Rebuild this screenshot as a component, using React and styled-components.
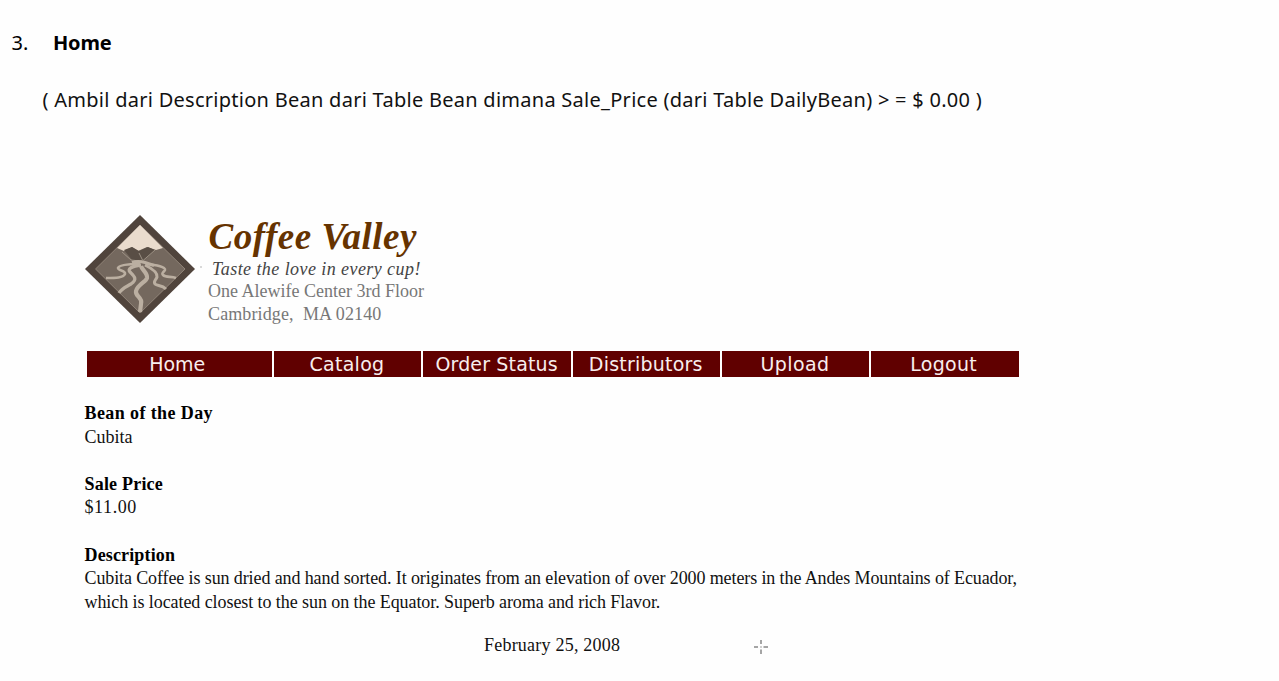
import React from 'react';
import styled, { createGlobalStyle } from 'styled-components';

const GlobalStyle = createGlobalStyle`
  body {
    margin: 0;
    background: #fefefe;
    color: #111;
  }
`;

const Page = styled.main`
  display: flex;
  flex-direction: column;
  box-sizing: border-box;
  width: 1279px;
  height: 681px;
  overflow: hidden;
  padding-top: 28px;
`;

const Heading = styled.h1`
  display: flex;
  margin: 0;
  padding-left: 11.5px;
  font: 700 20px/30px 'Noto Sans', sans-serif;
  letter-spacing: -0.2px;
  color: #000;
`;

const Ordinal = styled.span`
  width: 41.5px;
  font-weight: 400;
  letter-spacing: 0;
`;

const Note = styled.p`
  margin: 27px 0 0;
  padding-left: 42.5px;
  font: 20px/30px 'Noto Sans', sans-serif;
  letter-spacing: 0.27px;
  white-space: pre;
`;

const Site = styled.section`
  display: flex;
  flex-direction: column;
  width: 935px;
  margin: 99px 0 0 84px;
  font-family: 'Liberation Serif', serif;
`;

const Brand = styled.header`
  display: flex;
  align-items: flex-start;
  height: 137px;
`;

const Logo = styled.svg`
  width: 124px;
  height: 110px;
  flex: none;
`;

const BrandText = styled.div`
  display: flex;
  flex-direction: column;
  padding-top: 2px;
`;

const BrandName = styled.div`
  padding-left: 0.5px;
  font: italic 700 37px/42px 'Liberation Serif', serif;
  letter-spacing: 0.52px;
  color: #663300;
`;

const Tagline = styled.div`
  padding-left: 4px;
  font: italic 18px/22px 'Liberation Serif', serif;
  letter-spacing: 0.43px;
  color: #444;
`;

const Address = styled.div`
  font-size: 18px;
  line-height: 22.5px;
  letter-spacing: ${(p) => p.$spacing}px;
  white-space: pre;
  color: #777;
`;

const Nav = styled.nav`
  display: grid;
  grid-template-columns: 184.5px 147.5px 147.5px 146.5px 147.5px 147.5px;
  justify-content: space-between;
  height: 25px;
  margin-left: 3px;
`;

const NavItem = styled.a`
  background: #600000;
  color: #f8eeee;
  font: 19px/26px 'DejaVu Sans', sans-serif;
  letter-spacing: ${(p) => p.$spacing}px;
  text-align: center;
  text-indent: ${(p) => p.$shift || 0}px;
  white-space: nowrap;
`;

const Details = styled.dl`
  display: flex;
  flex-direction: column;
  gap: 23.6px;
  margin: 26px 0 0 0.5px;
  font-size: 18px;
  line-height: 23.6px;
`;

const Term = styled.dt`
  font-weight: 700;
  letter-spacing: ${(p) => p.$spacing}px;
  color: #000;
`;

const Value = styled.dd`
  margin: 0;
  letter-spacing: ${(p) => p.$spacing || 0}px;
  white-space: nowrap;
`;

const Footer = styled.footer`
  display: flex;
  align-items: center;
  margin-top: 19px;
  padding-left: 400px;
  font-size: 18px;
  line-height: 24px;
  letter-spacing: 0.22px;
`;

const Crosshair = styled.svg`
  width: 14px;
  height: 14px;
  margin: 3px 0 0 134px;
`;

const links = [
  { label: 'Home', spacing: 0, shift: -4 },
  { label: 'Catalog', spacing: 0.3, shift: -1 },
  { label: 'Order Status', spacing: 0.15, shift: -1 },
  { label: 'Distributors', spacing: 0.22, shift: -1 },
  { label: 'Upload', spacing: 0.4, shift: -1 },
  { label: 'Logout', spacing: 0.3, shift: -3 },
];

function CoffeeLogo() {
  return (
    <Logo viewBox="0 0 124 110">
      <path d="M56 1 111 55 56 109 1 55Z" fill="#50443c" />
      <path d="M56 11 101 55 56 99 11.500 55Z" fill="#74685e" stroke="#9a8e82" strokeWidth=".8" />
      <path d="M56 11 79 34 72 36 63 33 54 37 48 33 40 37 33 34Z" fill="#eadccd" />
      <path d="M40 36 48 33 55 37 64 33 71 36 59 47H49Z" fill="#594e45" />
      <path d="M38 38 47 46 56 47 58.500 47 71 36M55 39 58.500 46" fill="none" stroke="#a3978a" strokeWidth=".9" />
      <g fill="none" stroke="#bbafa1" strokeLinecap="butt" strokeLinejoin="round">
        <path d="M48 48.500q6-2 13 0l9 3" strokeWidth="3" />
        <path d="M56 50C45 50 35 51 34 54c0 3 8 2 7 6-2 4-9 4-19 4" strokeWidth="2.600" />
        <path d="M57 51c-9 1-14 4-11 7 4 4 8 7 1 12-5 3-9 4-12 9" strokeWidth="3.300" />
        <path d="M57 52c1 4 7 7 6 12-1 4-9 6-11 13-1 6 7 6 5 13l-1 8" strokeWidth="4.200" />
        <path d="M61 51c6 3 13 7 12 12-1 3-4 4-2 7 2 2 7 1 11 5" strokeWidth="3" />
        <path d="M62 50c11 1 20 3 19 6-1 2-4 3-2 5 3 3 8 1 13 3" strokeWidth="2.600" />
      </g>
      <circle cx="117" cy="53" r=".8" fill="#aaa" />
    </Logo>
  );
}

export default function App() {
  return (
    <>
      <GlobalStyle />
      <Page>
        <Heading>
          <Ordinal>3.</Ordinal>Home
        </Heading>
        <Note>{'( Ambil dari Description Bean dari Table Bean dimana Sale_Price (dari Table DailyBean) > = $ 0.00 )'}</Note>
        <Site>
          <Brand>
            <CoffeeLogo />
            <BrandText>
              <BrandName>Coffee Valley</BrandName>
              <Tagline>Taste the love in every cup!</Tagline>
              <Address $spacing={0}>One Alewife Center 3rd Floor</Address>
              <Address $spacing={0.12}>{'Cambridge,\u00a0 MA 02140'}</Address>
            </BrandText>
          </Brand>
          <Nav>
            {links.map((l) => (
              <NavItem key={l.label} $spacing={l.spacing} $shift={l.shift}>
                {l.label}
              </NavItem>
            ))}
          </Nav>
          <Details>
            <div>
              <Term $spacing={0.4}>Bean of the Day</Term>
              <Value>Cubita</Value>
            </div>
            <div>
              <Term $spacing={0.2}>Sale Price</Term>
              <Value $spacing={0.6}>$11.00</Value>
            </div>
            <div>
              <Term $spacing={0.15}>Description</Term>
              <Value $spacing={-0.11}>
                Cubita Coffee is sun dried and hand sorted. It originates from an elevation of over 2000 meters in the Andes Mountains of Ecuador,
              </Value>
              <Value $spacing={-0.075}>which is located closest to the sun on the Equator. Superb aroma and rich Flavor.</Value>
            </div>
          </Details>
          <Footer>
            February 25, 2008
            <Crosshair viewBox="0 0 14 14">
              <path d="M0 7h4M9.500 7h4.500M7 0v4M7 9.500v4.500" stroke="#888" strokeWidth="1.500" fill="none" />
              <circle cx="7" cy="7" r=".9" fill="#bbb" />
            </Crosshair>
          </Footer>
        </Site>
      </Page>
    </>
  );
}
